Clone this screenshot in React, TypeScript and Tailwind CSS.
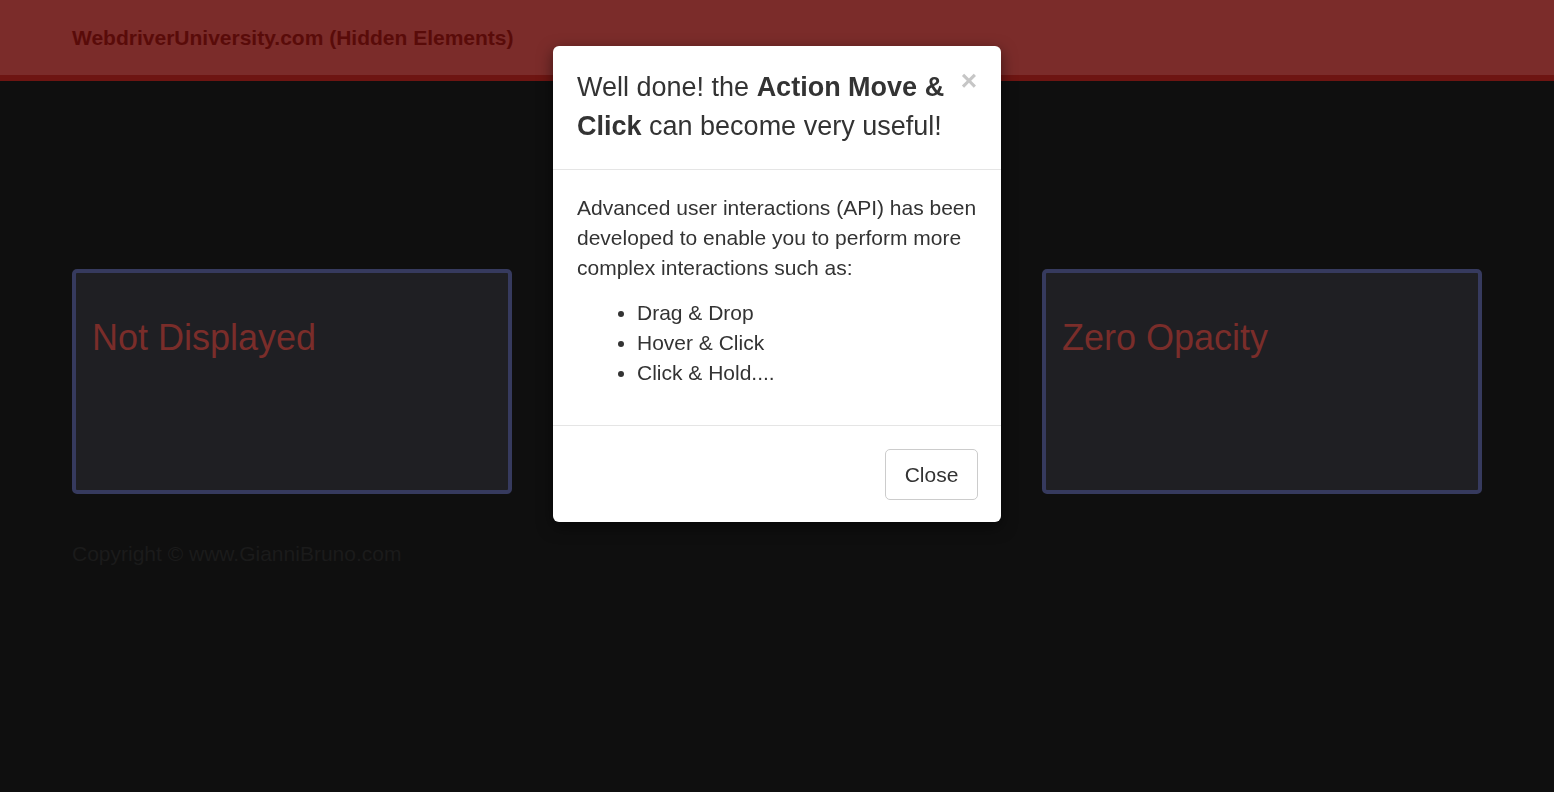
export default function App() {
    return (
        <div className="min-h-screen bg-[#0f0f0f] font-['Liberation_Sans',Arial,sans-serif]">
            {/* navbar */}
            <nav className="h-[81px] bg-[#7b2c2a] border-b-[6px] border-[#6e1512] px-[72px] flex items-center">
                <span className="text-[21px] font-bold text-[#590b09]">WebdriverUniversity.com (Hidden Elements)</span>
            </nav>

            <div className="px-[72px] pt-[188px]">
                <div className="grid grid-cols-3 gap-[45px]">
                    <div className="h-[225px] rounded-[5px] border-4 border-[#363a5e] bg-[#1f1f23] px-4 pt-[45px]">
                        <h1 className="text-[36px] leading-[40px] text-[#7a2d2a]">Not Displayed</h1>
                    </div>
                    {/* visibility hidden card */}
                    <div className="invisible h-[225px] rounded-[5px] border-4 border-[#363a5e] bg-[#1f1f23] px-4 pt-[45px]">
                        <h1 className="text-[36px] leading-[40px] text-[#7a2d2a]">Visibility Hidden</h1>
                    </div>
                    <div className="h-[225px] rounded-[5px] border-4 border-[#363a5e] bg-[#1f1f23] px-4 pt-[45px]">
                        <h1 className="text-[36px] leading-[40px] text-[#7a2d2a]">Zero Opacity</h1>
                    </div>
                </div>
                <p className="mt-[48px] text-[21px] leading-[24px] text-[#1b1b1b]">Copyright © www.GianniBruno.com</p>
            </div>

            {/* modal */}
            <div className="fixed inset-0 flex justify-center pt-[46px]">
                <div className="w-[448px] self-start bg-white rounded-[6px] shadow-[0_5px_15px_rgba(0,0,0,0.5)] text-[#333]">
                    <div className="flex justify-between items-start border-b border-[#e5e5e5] pl-6 pr-[24px] pt-[22px] pb-[23px]">
                        <h4 className="text-[27px] leading-[39px] w-[370px]">
                            Well done! the <b>Action Move &amp; Click</b> can become very useful!
                        </h4>
                        <button className="text-[28px] leading-none font-bold text-[#c6c6c6] -mt-[1px]">×</button>
                    </div>
                    <div className="px-6 pt-[23px] pb-[37px] text-[21px] leading-[30px]">
                        <p className="mb-[15px]">Advanced user interactions (API) has been developed to enable you to perform more complex interactions such as:</p>
                        <ul className="list-disc pl-[60px]">
                            <li>Drag &amp; Drop</li>
                            <li>Hover &amp; Click</li>
                            <li>Click &amp; Hold....</li>
                        </ul>
                    </div>
                    <div className="border-t border-[#e5e5e5] flex justify-end px-[23px] pt-[23px] pb-[22px]">
                        <button className="h-[51px] w-[93px] border border-[#ccc] rounded-[5px] text-[21px] text-[#333]">Close</button>
                    </div>
                </div>
            </div>
        </div>
    );
}
